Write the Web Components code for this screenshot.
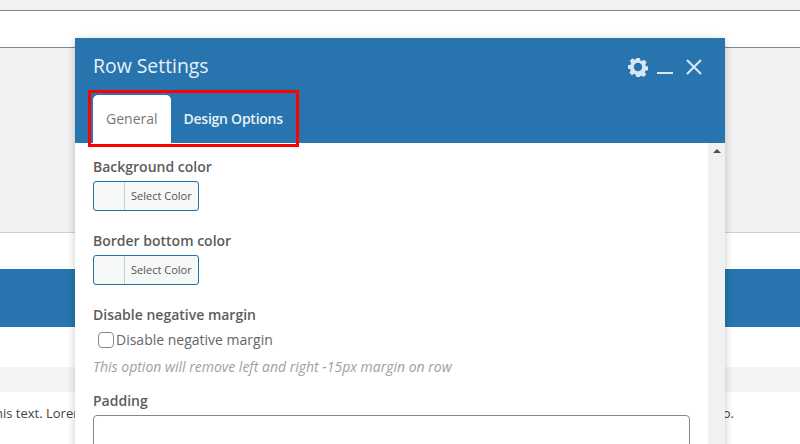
<!DOCTYPE html>
<html>
<head>
<meta charset="utf-8">
<style>
html, body { margin:0; padding:0; width:800px; height:444px; overflow:hidden; background:#fff; font-family:"Open Sans", sans-serif; }
</style>
</head>
<body>
<page-backdrop>
	<row-settings slot="overlay"></row-settings>
</page-backdrop>
<script>
class PageBackdrop extends HTMLElement {
	constructor() {
		super()
		this.attachShadow({ mode: 'open' })
		this.shadowRoot.innerHTML = `
      <style>
        :host { display:block; position:relative; width:800px; height:444px; overflow:hidden; color:#444; }
        .top { height:10px; background:#f1f1f1; border-bottom:1px solid #7e8993; }
        .input { height:36px; background:#fff; border-bottom:1px solid #7e8993; }
        .gray { height:184px; background:#f1f1f1; border-bottom:1px solid #ccd0d4; }
        .gap1 { height:36px; background:#fff; }
        .band { height:58px; background:#2774ae; }
        .gap2 { height:40px; background:#fff; }
        .strip { height:25px; background:#f4f4f4; }
        .text { height:52px; display:flex; justify-content:space-between; padding-top:11px; margin-left:-5px; box-sizing:border-box; font-size:13px; line-height:20px; white-space:nowrap; }
      </style>
      <div class="top"></div>
      <div class="input"></div>
      <div class="gray"></div>
      <div class="gap1"></div>
      <div class="band"></div>
      <div class="gap2"></div>
      <div class="strip"></div>
      <div class="text"><span>his text. Lorem</span><span style="margin-right:66px">o.</span></div>
      <slot name="overlay"></slot>
    `
	}
}

class ColorButton extends HTMLElement {
	constructor() {
		super()
		this.attachShadow({ mode: 'open' })
		this.shadowRoot.innerHTML = `
      <style>
        :host { display:flex; width:106px; height:30px; box-sizing:border-box; border:1px solid #2271b1; border-radius:3px; background:#f6f7f7; overflow:hidden; font-size:11px; color:#555; }
        .swatch { width:30px; border-right:1px solid #c8cbcf; }
        .label { flex:1; display:flex; align-items:center; padding:0 0 2px 6px; white-space:nowrap; }
      </style>
      <div class="swatch"></div>
      <div class="label"><slot></slot></div>
    `
	}
}

class RowSettings extends HTMLElement {
	constructor() {
		super()
		this.attachShadow({ mode: 'open' })
		this.shadowRoot.innerHTML = `
      <style>
        :host { display:flex; flex-direction:column; position:absolute; left:75px; top:38px; width:650px; height:420px; background:#fff; box-shadow:0 2px 8px rgba(0,0,0,.22); color:#555; }
        .head { flex:none; height:105px; background:#2774ae; display:flex; flex-direction:column; box-sizing:border-box; padding:0 18px; position:relative; }
        .titlebar { display:flex; align-items:center; justify-content:space-between; height:57px; }
        h1 { margin:0; font-size:19.4px; font-weight:400; color:#e8f1f8; line-height:54px; height:56px; }
        .icons { display:flex; align-items:center; gap:8px; margin-right:4px; margin-top:1px; }
        .icons svg { display:block; }
        .tabs { display:flex; align-items:stretch; height:48px; }
        .tab { padding:0 13px 2px; display:flex; align-items:center; font-size:14px; border-radius:5px 5px 0 0; }
        .tab.on { background:#fff; color:#777; }
        .tab.off { color:#e8f1f8; font-weight:600; letter-spacing:-.25px; }
        .hilite { position:absolute; left:13px; top:52px; width:211px; height:57px; box-sizing:border-box; border:3px solid #f00; pointer-events:none; }
        .body { flex:1; display:flex; min-height:0; }
        .content { flex:1; padding:14px 18px 0; box-sizing:border-box; }
        .scroll { flex:none; width:17px; background:#f1f1f1; display:flex; justify-content:center; padding-top:6px; box-sizing:border-box; }
        .arrow { width:0; height:0; border:4px solid transparent; border-top:0; border-bottom:4px solid #505050; }
        .field { display:flex; flex-direction:column; align-items:flex-start; }
        label.t { font-size:14px; font-weight:600; line-height:20px; color:#5c5c5c; margin-bottom:4px; }
        .f1 { height:74px; }
        .check { display:flex; align-items:center; font-size:14px; line-height:20px; margin:5px 0 0 5px; color:#666; }
        .box { width:16px; height:16px; box-sizing:border-box; border:1px solid #7e8993; border-radius:4px; background:#fff; margin-right:2px; }
        .hint { font-size:14px; font-style:italic; color:#a0a0a0; line-height:20px; margin-top:7px; }
        .input { width:597px; height:40px; box-sizing:border-box; border:1px solid #7e8993; border-radius:4px; background:#fff; }
      </style>
      <div class="head">
        <div class="titlebar">
          <h1>Row Settings</h1>
          <div class="icons">
            <svg width="22" height="22" viewBox="0 0 22 22" aria-hidden="true">
              <path fill="#d6e6f2" fill-rule="evenodd" d="M9 1h4l.6 2.8 1.6.7L17.7 3l2.8 2.8-1.5 2.5.7 1.7 2.3.5v4l-2.8.6-.7 1.6 1.5 2.5-2.8 2.8-2.5-1.5-1.6.7L13 22H9l-.6-2.8-1.6-.7-2.5 1.5-2.8-2.8 1.5-2.5-.7-1.6L0 13V9l2.8-.6.7-1.7L2 4.2 4.8 1.4l2.5 1.5 1.6-.7z" transform="translate(1 1) scale(.91)"/>
              <circle cx="11" cy="11" r="4.2" fill="#2774ae"/>
            </svg>
            <svg width="16" height="22" viewBox="0 0 16 22" aria-hidden="true"><rect y="16" width="16" height="2" fill="#d6e6f2"/></svg>
            <svg width="18" height="18" viewBox="0 0 18 18" aria-hidden="true" style="margin-left:4px"><path d="M2 2L16 16M16 2L2 16" stroke="#d6e6f2" stroke-width="2.2" fill="none"/></svg>
          </div>
        </div>
        <div class="tabs">
          <div class="tab on">General</div>
          <div class="tab off">Design Options</div>
        </div>
        <div class="hilite"></div>
      </div>
      <div class="body">
        <div class="content">
          <div class="field f1"><label class="t">Background color</label><color-button>Select Color</color-button></div>
          <div class="field f1"><label class="t">Border bottom color</label><color-button>Select Color</color-button></div>
          <div class="field">
            <label class="t" style="margin-bottom:0">Disable negative margin</label>
            <div class="check"><span class="box"></span>Disable negative margin</div>
            <div class="hint">This option will remove left and right -15px margin on row</div>
          </div>
          <div class="field" style="margin-top:14px">
            <label class="t">Padding</label>
            <div class="input"></div>
          </div>
        </div>
        <div class="scroll"><div class="arrow"></div></div>
      </div>
    `
	}
}

customElements.define('page-backdrop', PageBackdrop)
customElements.define('color-button', ColorButton)
customElements.define('row-settings', RowSettings)
</script>
</body>
</html>
